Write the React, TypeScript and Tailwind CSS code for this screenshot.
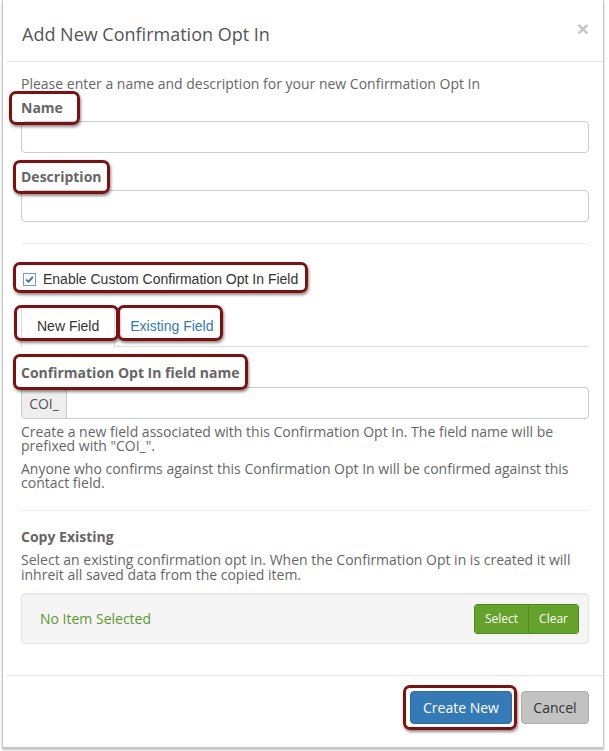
import React from "react";

const mark =
  "absolute border-[3px] border-[#7e1010] rounded-[7px] shadow-[1px_2px_3px_rgba(0,0,0,0.45)] pointer-events-none";

function Label({ children }: { children: React.ReactNode }) {
  return <div className="text-[14px] leading-[18px] font-bold text-[#666]">{children}</div>;
}

export default function App() {
  return (
    <div
      className="relative w-[609px] h-[751px] bg-white overflow-hidden"
      style={{ fontFamily: '"Open Sans", "Liberation Sans", sans-serif' }}
    >
      <div className="ml-[2px] w-[602px] h-[748px] flex flex-col bg-white border-x border-b border-[#c6c6c6] shadow-[0_2px_2px_rgba(0,0,0,0.25)]">
        {/* header */}
        <div className="relative h-[62px] ml-[4px] border-b border-[#e5e5e5]">
          <h4 className="pl-[15px] pt-[22px] text-[18px] leading-[24px] text-[#555]">
            Add New Confirmation Opt In
          </h4>
          <span
            className="absolute right-[14px] top-[13px] text-[21px] font-bold text-[#c4c4c4]"
            style={{ fontFamily: '"Liberation Sans", sans-serif' }}
          >
            ×
          </span>
        </div>

        {/* body */}
        <div className="flex-1 pl-[18px] pr-[14px] pt-[13px] text-[14px] text-[#666]">
          <p className="leading-[18px]">Please enter a name and description for your new Confirmation Opt In</p>

          <div className="mt-[6px]">
            <Label>Name</Label>
            <div className="mt-[4px] h-[32px] rounded-[4px] border border-[#ccc]" />
          </div>

          <div className="mt-[15px]">
            <Label>Description</Label>
            <div className="mt-[4px] h-[32px] rounded-[4px] border border-[#ccc]" />
          </div>

          <div className="mt-[21px] border-t border-[#eee]" />

          <label
            className="mt-[25px] flex items-center gap-[7px] pl-[2px] text-[14px] leading-[20px] text-[#333]"
            style={{ fontFamily: '"Liberation Sans", Arial, sans-serif' }}
          >
            <span className="flex h-[13px] w-[13px] items-center justify-center border border-[#7a9cc6] bg-white">
              <svg width="9" height="9" viewBox="0 0 9 9">
                <path d="M1.2 4.6 L3.5 6.8 L7.8 1.8" fill="none" stroke="#2c6bb5" strokeWidth="1.8" />
              </svg>
            </span>
            Enable Custom Confirmation Opt In Field
          </label>

          <div
            className="mt-[17px] flex border-b border-[#ddd] text-[14px] leading-[20px]"
            style={{ fontFamily: '"Liberation Sans", Arial, sans-serif' }}
          >
            <div className="-mb-px rounded-t-[4px] border border-[#ddd] border-b-white bg-white px-[15px] py-[9px] text-[#333]">
              New Field
            </div>
            <div className="px-[15px] py-[10px] text-[#337ab7]">Existing Field</div>
          </div>

          <div className="mt-[17px]">
            <Label>Confirmation Opt In field name</Label>
            <div className="mt-[5px] flex h-[32px] rounded-[4px] border border-[#ccc]">
              <div className="flex w-[45px] items-center justify-center rounded-l-[4px] border-r border-[#ccc] bg-[#eee] text-[14px] text-[#555]">
                COI_
              </div>
            </div>
          </div>

          <p className="mt-[6px] leading-[14px]">
            Create a new field associated with this Confirmation Opt In. The field name will be prefixed with "COI_".
          </p>
          <p className="mt-[9px] leading-[14px]">
            Anyone who confirms against this Confirmation Opt In will be confirmed against this contact field.
          </p>

          <div className="mt-[20px] border-t border-[#eee]" />

          <div className="mt-[17px]">
            <Label>Copy Existing</Label>
          </div>
          <p className="mt-[6px] leading-[15px]">
            Select an existing confirmation opt in. When the Confirmation Opt in is created it will inhreit all saved data from the copied item.
          </p>

          <div className="mt-[11px] flex h-[51px] items-center justify-between rounded-[4px] border border-[#e3e3e3] bg-[#f5f5f5] pl-[18px] pr-[9px] shadow-[inset_0_1px_1px_rgba(0,0,0,0.05)]">
            <span className="text-[14px] text-[#5a9a2b]">No Item Selected</span>
            <div className="flex h-[30px] overflow-hidden rounded-[3px] border border-[#4f8a1e] text-[12px] text-white">
              <span className="flex items-center bg-[#64a22b] px-[10px] border-r border-[#4f8a1e]">Select</span>
              <span className="flex items-center bg-[#64a22b] px-[10px]">Clear</span>
            </div>
          </div>
        </div>

        {/* footer */}
        <div className="ml-[4px] mb-[23px] flex justify-end gap-[9px] border-t border-[#e5e5e5] pr-[14px] pt-[15px] text-[14px]">
          <button className="h-[33px] w-[102px] rounded-[4px] border border-[#2e6da4] bg-[#337ab7] text-white">
            Create New
          </button>
          <button className="h-[33px] w-[68px] rounded-[4px] border border-[#adadad] bg-[#c2c2c2] text-[#333]">
            Cancel
          </button>
        </div>
      </div>

      {/* annotation marks */}
      <div className={`${mark} left-[9px] top-[91px] w-[71px] h-[34px]`} />
      <div className={`${mark} left-[13px] top-[160px] w-[97px] h-[34px]`} />
      <div className={`${mark} left-[13px] top-[262px] w-[295px] h-[31px]`} />
      <div className={`${mark} left-[14px] top-[305px] w-[105px] h-[36px]`} />
      <div className={`${mark} left-[117px] top-[305px] w-[106px] h-[36px]`} />
      <div className={`${mark} left-[13px] top-[354px] w-[235px] h-[36px]`} />
      <div className={`${mark} left-[403px] top-[685px] w-[114px] h-[45px]`} />
    </div>
  );
}
